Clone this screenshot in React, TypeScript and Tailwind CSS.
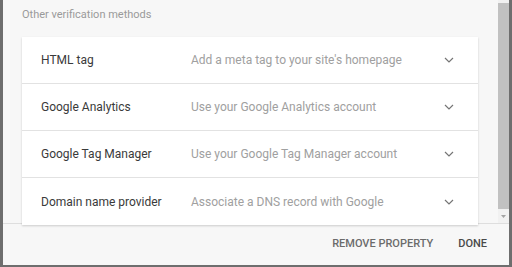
const methods = [
  { name: "HTML tag", desc: "Add a meta tag to your site's homepage" },
  { name: "Google Analytics", desc: "Use your Google Analytics account" },
  { name: "Google Tag Manager", desc: "Use your Google Tag Manager account" },
  { name: "Domain name provider", desc: "Associate a DNS record with Google" },
];

function Chevron() {
  return (
    <svg width="10" height="6" viewBox="0 0 10 6" className="shrink-0">
      <polyline points="1,1 5,5 9,1" fill="none" stroke="#757575" strokeWidth="1.2" />
    </svg>
  );
}

export default function App() {
  return (
    <div
      className="w-[512px] h-[267px] flex flex-col bg-[#f7f7f7] border-l-[3px] border-r-[3px] border-b-2 border-[#6e6e6e] overflow-hidden"
      style={{ fontFamily: "Roboto, 'Liberation Sans', sans-serif" }}
    >
      <div className="flex h-[224px] border-b border-[#dedede]">
        <div className="flex-1 pl-[19px] pr-[20px] pt-[7px]">
          <div className="text-[11px] leading-4 text-[#9a9a9a]">Other verification methods</div>
          <div className="mt-[14px] bg-white shadow-[0_1px_2px_rgba(0,0,0,0.18)]">
            {methods.map((m, i) => (
              <div
                key={m.name}
                className={
                  "flex items-center h-[47px] pl-[19px] pr-[24px] " +
                  (i < methods.length - 1 ? "border-b border-[#e2e2e2]" : "")
                }
              >
                <div className="w-[150px] text-[12px] text-[#3a3a3a]">{m.name}</div>
                <div className="flex-1 text-[12px] text-[#a0a0a0]">{m.desc}</div>
                <Chevron />
              </div>
            ))}
          </div>
        </div>
        <div className="w-[11px] flex flex-col bg-[#f1f1f1]">
          <div className="h-[3px]" />
          <div className="h-[206px] bg-[#c1c1c1]" />
          <div className="flex-1 flex items-center justify-center">
            <svg width="5" height="3" viewBox="0 0 5 3">
              <polygon points="0,0 5,0 2.5,3" fill="#a3a3a3" />
            </svg>
          </div>
        </div>
      </div>
      <div className="flex-1 flex items-center justify-end gap-[25px] pr-[22px] text-[11px] font-medium">
        <span className="text-[#6b6b6b]">REMOVE PROPERTY</span>
        <span className="text-[#4a4a4a]">DONE</span>
      </div>
    </div>
  );
}
